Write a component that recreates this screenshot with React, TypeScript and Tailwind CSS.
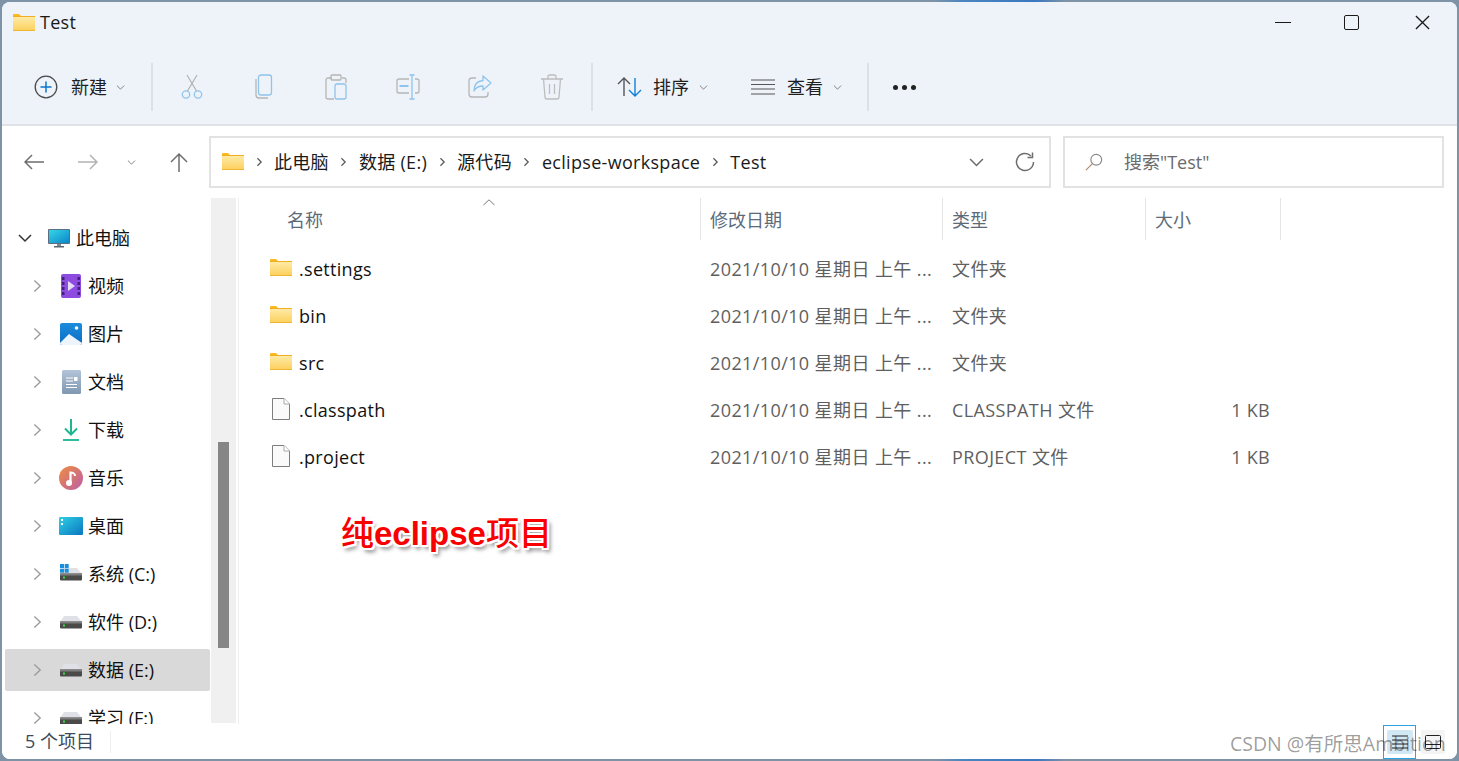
import React from "react";

const font = "font-['Open_Sans','Noto_Sans_CJK_SC',sans-serif]";

function Folder({ className = "" }: { className?: string }) {
  return (
    <svg viewBox="0 0 22 17" className={className}>
      <defs>
        <linearGradient id="fg" x1="0" y1="0" x2="0" y2="1">
          <stop offset="0" stopColor="#ffeaa6" />
          <stop offset="1" stopColor="#fcd15f" />
        </linearGradient>
      </defs>
      <path d="M0 1.200C0 .5.5 0 1.200 0H6l2 2h14v2H0z" fill="#f9b91f" />
      <rect x="0" y="2.200" width="22" height="14.800" fill="#f0ac25" />
      <rect x="0" y="3" width="22" height="13.200" fill="url(#fg)" />
    </svg>
  );
}

function FileIcon() {
  return (
    <svg viewBox="0 0 18 22" className="w-[18px] h-[22px]">
      <path d="M.5.5h11.500l5.500 5.500v15.500H.5z" fill="#fafafa" stroke="#7d7d7d" />
      <path d="M12 .5V6h5.500" fill="#fff" stroke="#a8a8a8" />
    </svg>
  );
}

function Chevron() {
  return (
    <svg viewBox="0 0 10 14" className="w-[9px] h-[14px]">
      <path d="M1.500 1l6.500 6-6.500 6" fill="none" stroke="#9a9a9a" strokeWidth="1.500" />
    </svg>
  );
}

function SmallDown({ className = "w-[10px] h-[6px]" }: { className?: string }) {
  return (
    <svg viewBox="0 0 10 6" className={className}>
      <path d="M.7.7L5 5l4.300-4.300" fill="none" stroke="#6b6b6b" strokeWidth="1" />
    </svg>
  );
}

function Sep() {
  return <div className="w-[2px] h-[48px] bg-[#dde1e6]" />;
}

function BreadSep() {
  return (
    <svg viewBox="0 0 8 12" className="w-[7px] h-[10px] mx-[11.5px]">
      <path d="M1.500 1.500L6 6l-4.500 4.500" fill="none" stroke="#5f5f5f" strokeWidth="1.600" />
    </svg>
  );
}

function Drive({ win = false }: { win?: boolean }) {
  return (
    <svg viewBox="0 0 24 22" className="w-[24px] h-[22px]">
      <g transform="translate(0 -2.500)">
        <path d="M5 7.500h13l4.500 5.500H1.500z" fill="#dfe1e6" />
        <path d="M1 13h22v6a1 1 0 0 1-1 1H2a1 1 0 0 1-1-1z" fill="#4a4a4a" />
        <rect x="1" y="13" width="22" height="2" fill="#7d7d7d" />
        <rect x="4" y="16" width="2" height="2" fill="#3bdb3b" />
      </g>
      {win && (
        <g fill="#1a8fe0">
          <rect x="1" y="1" width="4" height="4" />
          <rect x="5.700" y="1" width="4" height="4" />
          <rect x="1" y="5.700" width="4" height="4" />
          <rect x="5.700" y="5.700" width="4" height="4" />
        </g>
      )}
    </svg>
  );
}

function VideoIcon() {
  return (
    <svg viewBox="0 0 20 24" className="w-[20px] h-[24px]">
      <rect width="20" height="24" rx="2" fill="#8d4be0" />
      <g fill="#43217a">
        <rect x="1" y="3" width="2.500" height="3" />
        <rect x="1" y="8" width="2.500" height="3" />
        <rect x="1" y="13" width="2.500" height="3" />
        <rect x="1" y="18" width="2.500" height="3" />
        <rect x="16.500" y="3" width="2.500" height="3" />
        <rect x="16.500" y="8" width="2.500" height="3" />
        <rect x="16.500" y="13" width="2.500" height="3" />
        <rect x="16.500" y="18" width="2.500" height="3" />
      </g>
      <path d="M7 7l7 5-7 5z" fill="#e6dcf8" />
    </svg>
  );
}

function PictureIcon() {
  return (
    <svg viewBox="0 0 22 22" className="w-[22px] h-[22px]">
      <defs>
        <linearGradient id="pic" x1="0" y1="0" x2="0" y2="1">
          <stop offset="0" stopColor="#1d8ddc" />
          <stop offset="1" stopColor="#0a6cc4" />
        </linearGradient>
      </defs>
      <rect width="22" height="22" rx="2" fill="url(#pic)" />
      <circle cx="16.500" cy="5" r="1.800" fill="#fff" />
      <path d="M0 20L9 11l13 9v0a2 2 0 0 1-2 2H2a2 2 0 0 1-2-2z" fill="#eef4fb" />
    </svg>
  );
}

function DocIcon() {
  return (
    <svg viewBox="0 0 19 24" className="w-[19px] h-[24px]">
      <defs>
        <linearGradient id="doc" x1="0" y1="0" x2="0" y2="1">
          <stop offset="0" stopColor="#b2c4d8" />
          <stop offset="1" stopColor="#7f97b2" />
        </linearGradient>
      </defs>
      <rect width="19" height="24" rx="1.500" fill="url(#doc)" />
      <g stroke="#fff" strokeWidth="1">
        <path d="M4 8h7M4 11h7M4 14.500h11M4 17.500h11" />
      </g>
      <rect x="12" y="7" width="3.500" height="4" fill="#fff" />
    </svg>
  );
}

function DownloadIcon() {
  return (
    <svg viewBox="0 0 18 22" className="w-[18px] h-[22px]">
      <path d="M9 0v15M3 9.500l6 6 6-6" fill="none" stroke="#1fb58f" strokeWidth="2" />
      <path d="M1 21h16" stroke="#2dbd9a" strokeWidth="2" />
    </svg>
  );
}

function MusicIcon() {
  return (
    <svg viewBox="0 0 24 24" className="w-[24px] h-[24px]">
      <defs>
        <linearGradient id="mus" x1="0" y1="0" x2="1" y2="1">
          <stop offset="0" stopColor="#ef8d3f" />
          <stop offset="1" stopColor="#bb5ea8" />
        </linearGradient>
      </defs>
      <circle cx="12" cy="12" r="12" fill="url(#mus)" />
      <circle cx="10" cy="17" r="3" fill="#fff" />
      <path d="M11.500 17V6.500c2 0 4.500 1 4.500 3.500" fill="none" stroke="#fff" strokeWidth="2.200" />
    </svg>
  );
}

function DesktopIcon() {
  return (
    <svg viewBox="0 0 24 18" className="w-[24px] h-[18px]">
      <defs>
        <linearGradient id="desk" x1="0" y1="0" x2="1" y2="1">
          <stop offset="0" stopColor="#2fd0e4" />
          <stop offset="1" stopColor="#0a76c0" />
        </linearGradient>
      </defs>
      <rect width="24" height="18" rx="1" fill="url(#desk)" />
      <rect x="2" y="2" width="2" height="2" fill="#fff" />
      <rect x="2" y="6" width="2" height="2" fill="#fff" />
    </svg>
  );
}

function PcIcon() {
  return (
    <svg viewBox="0 0 22 19" className="w-[22px] h-[19px]">
      <defs>
        <linearGradient id="pc" x1="0" y1="0" x2="1" y2="1">
          <stop offset="0" stopColor="#33d6e8" />
          <stop offset="1" stopColor="#0d86c8" />
        </linearGradient>
      </defs>
      <rect x="0" y="0" width="22" height="15" rx="1" fill="#5c6f80" />
      <rect x="1" y="1" width="20" height="13" fill="url(#pc)" />
      <rect x="9" y="15" width="4" height="2" fill="#7e8c99" />
      <rect x="6" y="17" width="10" height="1.500" fill="#5c6770" />
    </svg>
  );
}

const sideItems: { icon: React.ReactNode; label: string; active?: boolean }[] = [
  { icon: <VideoIcon />, label: "视频" },
  { icon: <PictureIcon />, label: "图片" },
  { icon: <DocIcon />, label: "文档" },
  { icon: <DownloadIcon />, label: "下载" },
  { icon: <MusicIcon />, label: "音乐" },
  { icon: <DesktopIcon />, label: "桌面" },
  { icon: <Drive win />, label: "系统 (C:)" },
  { icon: <Drive />, label: "软件 (D:)" },
  { icon: <Drive />, label: "数据 (E:)", active: true },
  { icon: <Drive />, label: "学习 (F:)" },
];

const files = [
  { name: ".settings", folder: true, type: "文件夹", size: "" },
  { name: "bin", folder: true, type: "文件夹", size: "" },
  { name: "src", folder: true, type: "文件夹", size: "" },
  { name: ".classpath", folder: false, type: "CLASSPATH 文件", size: "1 KB" },
  { name: ".project", folder: false, type: "PROJECT 文件", size: "1 KB" },
];

function ToolIcon({ children, className }: { children: React.ReactNode; className: string }) {
  return (
    <svg viewBox="0 0 24 26" fill="none" strokeWidth="1.300" className={className}>
      {children}
    </svg>
  );
}

export default function App() {
  return (
    <div className={`${font} w-[1459px] h-[761px] overflow-hidden bg-[linear-gradient(to_right,#7f93a6_0%,#7f93a6_64%,#4a85c0_66%,#3a78c0_71%,#7f93a6_73%,#7f93a6_100%)] p-[2px] text-[18px] leading-none tracking-[0.3px]`}>
      <div className="relative w-full h-full rounded-[8px] overflow-hidden bg-white flex flex-col">
        {/* title bar */}
        <div className="h-[48px] bg-[#eef3f9] flex items-center shrink-0">
          <Folder className="w-[22px] h-[17px] ml-[11px] mr-[5px] -mt-[8px]" />
          <span className="text-[18px] text-[#1a1a1a] -mt-[8px]">Test</span>
          <div className="flex-1" />
          <div className="flex items-center -mt-[8px]">
            <div className="w-[16px] h-[1px] bg-[#1a1a1a]" />
            <div className="w-[15px] h-[15px] border-[1.5px] border-[#1a1a1a] rounded-[2px] ml-[53px]" />
            <svg viewBox="0 0 16 16" className="w-[15px] h-[15px] ml-[56px] mr-[27px]">
              <path d="M1 1l14 14M15 1L1 15" stroke="#1a1a1a" strokeWidth="1.400" />
            </svg>
          </div>
        </div>

        {/* toolbar */}
        <div className="h-[76px] bg-[#eef3f9] border-b-2 border-[#dfe3e8] flex items-center shrink-0 pl-[32px]">
          <svg viewBox="0 0 24 24" className="w-[24px] h-[24px] mr-[13px]">
            <circle cx="12" cy="12" r="10.800" fill="none" stroke="#4a4a4a" strokeWidth="1.300" />
            <path d="M12 6.500v11M6.500 12h11" stroke="#0a74cc" strokeWidth="1.500" />
          </svg>
          <span className="text-[#1f1f1f] w-[36px] whitespace-nowrap tracking-normal">新建</span>
          <SmallDown className="w-[9px] h-[5px] ml-[9px] mr-[26px]" />
          <Sep />
          {/* cut */}
          <ToolIcon className="w-[24px] h-[26px] ml-[27px]">
            <path d="M7 1l9.500 16M17 1L7.500 17" stroke="#b5b5b5" />
            <circle cx="6" cy="20.500" r="3.700" stroke="#8fc4ec" />
            <circle cx="18" cy="20.500" r="3.700" stroke="#8fc4ec" />
          </ToolIcon>
          {/* copy */}
          <ToolIcon className="w-[24px] h-[26px] ml-[48px]">
            <path d="M4 5v16a3 3 0 0 0 3 3h9" stroke="#b5b5b5" />
            <rect x="6.500" y="1" width="13" height="20" rx="2.500" stroke="#8fc4ec" />
          </ToolIcon>
          {/* paste */}
          <ToolIcon className="w-[24px] h-[26px] ml-[48px]">
            <path d="M8 4H4a2 2 0 0 0-2 2v17a2 2 0 0 0 2 2h6M18 4h2a2 2 0 0 1 2 2v3" stroke="#b5b5b5" />
            <rect x="7" y="1" width="10" height="5" rx="1" stroke="#b5b5b5" />
            <rect x="11" y="10" width="11" height="15" rx="2" stroke="#8fc4ec" />
          </ToolIcon>
          {/* rename */}
          <ToolIcon className="w-[24px] h-[26px] ml-[48px]">
            <path d="M13 5H3a2 2 0 0 0-2 2v10a2 2 0 0 0 2 2h10M19 5h2a2 2 0 0 1 2 2v10a2 2 0 0 1-2 2h-2" stroke="#b5b5b5" />
            <path d="M13.500 1h5M16 1v24M13.500 25h5" stroke="#8fc4ec" />
            <path d="M3.500 12h9" stroke="#8fc4ec" strokeWidth="2" />
          </ToolIcon>
          {/* share */}
          <ToolIcon className="w-[24px] h-[26px] ml-[48px]">
            <path d="M8 4H4a3 3 0 0 0-3 3v13a3 3 0 0 0 3 3h13a3 3 0 0 0 3-3v-2" stroke="#b5b5b5" />
            <path d="M15 2l8 7-8 7v-4c-4 0-7 1-9 5 0-6 3-10 9-10.500z" stroke="#8fc4ec" strokeLinejoin="round" />
          </ToolIcon>
          {/* trash */}
          <ToolIcon className="w-[24px] h-[26px] ml-[48px]">
            <path d="M1 5h22M8 5V3a2 2 0 0 1 2-2h4a2 2 0 0 1 2 2v2M3.500 5l1.500 18a2 2 0 0 0 2 2h10a2 2 0 0 0 2-2l1.500-18M9.500 10v10M14.500 10v10" stroke="#bdbdbd" />
          </ToolIcon>
          <div className="ml-[27px]"><Sep /></div>
          {/* sort */}
          <svg viewBox="0 0 26 20" className="w-[26px] h-[20px] ml-[24px] mr-[10px]">
            <path d="M7 19V1M1 7l6-6 6 6" fill="none" stroke="#555" strokeWidth="1.400" />
            <path d="M18 1v18M12 13l6 6 6-6" fill="none" stroke="#1080d8" strokeWidth="1.400" />
          </svg>
          <span className="text-[#1f1f1f] w-[36px] whitespace-nowrap tracking-normal">排序</span>
          <SmallDown className="w-[9px] h-[5px] ml-[10px] mr-[43px]" />
          {/* view */}
          <svg viewBox="0 0 24 16" className="w-[24px] h-[16px] mr-[12px]">
            <path d="M0 1h24M0 5.500h24M0 10h24M0 15h24" stroke="#555" strokeWidth="1.100" />
          </svg>
          <span className="text-[#1f1f1f] w-[36px] whitespace-nowrap tracking-normal">查看</span>
          <SmallDown className="w-[9px] h-[5px] ml-[10px] mr-[25px]" />
          <Sep />
          <div className="flex gap-[4px] ml-[24px]">
            <div className="w-[5px] h-[5px] rounded-full bg-[#222]" />
            <div className="w-[5px] h-[5px] rounded-full bg-[#222]" />
            <div className="w-[5px] h-[5px] rounded-full bg-[#222]" />
          </div>
        </div>

        {/* address row */}
        <div className="h-[72px] flex items-center shrink-0">
          <svg viewBox="0 0 20 16" className="w-[20px] h-[16px] ml-[22px]">
            <path d="M20 8H1M8 1L1 8l7 7" fill="none" stroke="#6e6e6e" strokeWidth="1.500" />
          </svg>
          <svg viewBox="0 0 20 16" className="w-[20px] h-[16px] ml-[34px]">
            <path d="M0 8h19M12 1l7 7-7 7" fill="none" stroke="#b2b2b2" strokeWidth="1.500" />
          </svg>
          <SmallDown className="w-[9px] h-[5px] ml-[29px]" />
          <svg viewBox="0 0 20 20" className="w-[20px] h-[20px] ml-[33px]">
            <path d="M10 20V2M2 10l8-8 8 8" fill="none" stroke="#6e6e6e" strokeWidth="1.500" />
          </svg>
          <div className="h-[52px] w-[842px] ml-[20px] border-2 border-[#e2e2e2] flex items-center pl-[11px]">
            <Folder className="w-[22px] h-[17px] mr-[12px] -mt-[2px]" />
            <svg viewBox="0 0 8 12" className="w-[7px] h-[10px] mr-[11px]">
              <path d="M1.500 1.500L6 6l-4.500 4.500" fill="none" stroke="#5f5f5f" strokeWidth="1.600" />
            </svg>
            <span className="text-[#1a1a1a]">此电脑</span>
            <BreadSep />
            <span className="text-[#1a1a1a]">数据 (E:)</span>
            <BreadSep />
            <span className="text-[#1a1a1a]">源代码</span>
            <BreadSep />
            <span className="text-[#1a1a1a]">eclipse-workspace</span>
            <BreadSep />
            <span className="text-[#1a1a1a]">Test</span>
            <div className="flex-1" />
            <SmallDown className="w-[17px] h-[9px] mr-[30px]" />
            <svg viewBox="0 0 20 20" className="w-[20px] h-[20px] mr-[14px]">
              <path d="M18.500 10a8.500 8.500 0 1 1-2.500-6" fill="none" stroke="#6e6e6e" strokeWidth="1.500" />
              <path d="M17.500 0.500v5h-5" fill="none" stroke="#6e6e6e" strokeWidth="1.500" />
            </svg>
          </div>
          <div className="h-[52px] w-[381px] ml-[12px] border-2 border-[#e2e2e2] flex items-center pl-[20px]">
            <svg viewBox="0 0 20 20" className="w-[18px] h-[18px] mr-[21px]">
              <circle cx="12.500" cy="7.500" r="6" fill="none" stroke="#8a8a8a" strokeWidth="1.300" />
              <path d="M8 12L1 19" stroke="#b08a70" strokeWidth="1.300" />
            </svg>
            <span className="text-[#6b6b6b] tracking-normal">搜索"Test"</span>
          </div>
        </div>

        {/* main */}
        <div className="flex-1 flex min-h-0">
          {/* sidebar */}
          <div className="w-[209px] shrink-0 overflow-hidden pt-[16px] pl-[3px] pr-[1px]">
            <div className="h-[48px] flex items-center pl-[13px]">
              <svg viewBox="0 0 14 9" className="w-[14px] h-[9px]">
                <path d="M1 1l6 6 6-6" fill="none" stroke="#333" strokeWidth="1.500" />
              </svg>
              <div className="ml-[16px] mr-[6px]"><PcIcon /></div>
              <span className="text-[#111] tracking-normal">此电脑</span>
            </div>
            {sideItems.map((it) => (
              <div key={it.label} className="h-[48px] py-[3px]">
                <div className={`h-[42px] rounded-[2px] flex items-center pl-[28px] ${it.active ? "bg-[#d9d9d9]" : ""}`}>
                  <Chevron />
                  <div className="w-[24px] ml-[17px] mr-[5px] flex justify-center">{it.icon}</div>
                  <span className="text-[#111] whitespace-nowrap tracking-normal">{it.label}</span>
                </div>
              </div>
            ))}
          </div>

          {/* scrollbar */}
          <div className="w-[25px] h-[525px] shrink-0 bg-[#f0f0f0] pl-[7px] pt-[244px]">
            <div className="w-[11px] h-[206px] bg-[#868686]" />
          </div>
          <div className="w-[3px] shrink-0 border-r border-[#eeeeee]" />

          {/* file list */}
          <div className="flex-1 min-w-0 pl-[2px]">
            <div className="h-[42px] flex text-[#5c6b7a] relative tracking-normal">
              <div className="w-[460px] border-r border-[#e4e4e4] flex items-center pl-[46px] pt-[2px]">名称</div>
              <div className="w-[242px] border-r border-[#e4e4e4] flex items-center pl-[9px] pt-[2px]">修改日期</div>
              <div className="w-[203px] border-r border-[#e4e4e4] flex items-center pl-[9px] pt-[2px]">类型</div>
              <div className="w-[135px] border-r border-[#e4e4e4] flex items-center pl-[9px] pt-[2px]">大小</div>
              <svg viewBox="0 0 12 7" className="absolute left-[242px] top-[1px] w-[12px] h-[7px]">
                <path d="M.5 6L6 .8 11.500 6" fill="none" stroke="#777" strokeWidth="1" />
              </svg>
            </div>
            <div className="pt-[5px]">
              {files.map((f) => (
                <div key={f.name} className="h-[47px] flex items-center">
                  <div className="w-[460px] flex items-center pl-[29px]">
                    <div className="w-[22px] flex justify-center -mt-[2px]">
                      {f.folder ? <Folder className="w-[22px] h-[17px]" /> : <FileIcon />}
                    </div>
                    <span className="ml-[7px] text-[#111]">{f.name}</span>
                  </div>
                  <div className="w-[242px] pl-[9px] text-[#5f5f5f] whitespace-nowrap tracking-[0.4px]">2021/10/10 星期日 上午 ...</div>
                  <div className="w-[203px] pl-[9px] text-[#5f5f5f] whitespace-nowrap tracking-[0.4px]">{f.type}</div>
                  <div className="w-[124px] text-right text-[#5f5f5f]">{f.size}</div>
                </div>
              ))}
            </div>
          </div>
        </div>

        {/* status bar */}
        <div className="h-[35px] bg-white flex items-center shrink-0 pl-[23px] relative">
          <span className="text-[#3c4a5a] pr-[16px] tracking-normal -mt-[2px]">5 个项目</span>
          <div className="w-[1px] h-[22px] bg-[#eeeeee]" />
          <div className="flex-1" />
          <div className="w-[33px] h-[34px] border border-[#2aa3de] bg-white flex items-center justify-center">
            <div className="w-[26px] h-[24px] bg-[#d3e8f5] rounded-[2px] flex items-center justify-center">
              <svg viewBox="0 0 16 14" className="w-[16px] h-[14px]">
                <path d="M0 1h16M0 5h16M0 9h16M0 13h16" stroke="#222" strokeWidth="1" />
              </svg>
            </div>
          </div>
          <div className="w-[24px] h-[24px] ml-[5px] mr-[12px] bg-[#f4f4f4] rounded-[2px] flex items-center justify-center">
            <svg viewBox="0 0 16 14" className="w-[16px] h-[14px]">
              <rect x=".5" y=".5" width="15" height="13" rx="1" fill="none" stroke="#222" />
              <path d="M0 9.500h16" stroke="#222" />
            </svg>
          </div>
        </div>

        {/* overlays drawn onto the screenshot */}
        <div className="absolute left-[339px] top-[512px] text-[33px] leading-[40px] font-bold tracking-normal text-[#f80000] whitespace-nowrap font-['Liberation_Sans','Noto_Sans_CJK_SC',sans-serif] [text-shadow:2px_0_0_#fff,-2px_0_0_#fff,0_2px_0_#fff,0_-2px_0_#fff,2px_2px_0_#fff,-2px_-2px_0_#fff,2px_-2px_0_#fff,-2px_2px_0_#fff,3px_4px_4px_#0000008c]">
          <span className="font-medium">纯</span>eclipse<span className="font-medium">项目</span>
        </div>
        <div className="absolute left-[1228px] top-[731px] text-[19.5px] leading-[22px] tracking-normal text-[#00000066] whitespace-nowrap">
          CSDN @有所思Ambition
        </div>
      </div>
    </div>
  );
}
